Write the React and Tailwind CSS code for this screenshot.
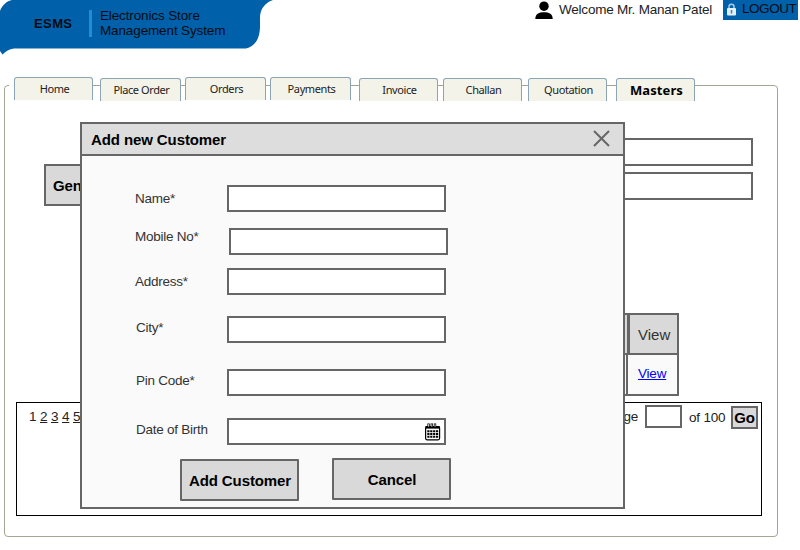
import React from "react";

const tabs = [
  { label: "Home", box: "ml-[9px] w-[79px]", text: "pl-[2px]" },
  { label: "Place Order", box: "ml-[7px] mt-px w-[81px]", text: "pl-[2px]" },
  { label: "Orders", box: "ml-[4px] w-[81px]", text: "pl-[2px]" },
  { label: "Payments", box: "ml-[4px] w-[81px]", text: "pl-[2px]" },
  { label: "Invoice", box: "ml-[8px] mt-px w-[79px]", text: "pl-[2px]" },
  { label: "Challan", box: "ml-[5px] mt-px w-[79px]", text: "pl-[2px]" },
  { label: "Quotation", box: "ml-[6px] mt-px w-[79px]", text: "pl-[2px]" },
  { label: "Masters", box: "ml-[9px] mt-px w-[79px]", text: "pl-[2px] text-[13px] font-bold text-black tracking-[0.1px]" },
];

const fields = [
  { label: "Name*", row: "mt-[29px]", pad: "pl-[53px]", lab: "w-[92px]", up: "mt-[6px]" },
  { label: "Mobile No*", row: "mt-[16px]", pad: "pl-[53px]", lab: "w-[94px]", up: "mt-[1px]" },
  { label: "Address*", row: "mt-[13px]", pad: "pl-[53px]", lab: "w-[92px]", up: "mt-[6px]" },
  { label: "City*", row: "mt-[21px]", pad: "pl-[54px]", lab: "w-[91px]", up: "mt-[4px]" },
  { label: "Pin Code*", row: "mt-[26px]", pad: "pl-[54px]", lab: "w-[91px]", up: "mt-[4px]" },
  { label: "Date of Birth", row: "mt-[22px]", pad: "pl-[54px]", lab: "w-[91px]", up: "mt-[4px]", date: true },
];

function Calendar() {
  return (
    <svg width="17" height="18" viewBox="0 0 17 18">
      <rect x="1.6" y="3.5" width="14" height="13.3" rx="1.5" fill="#fff" stroke="#000" strokeWidth="1.2" />
      <rect x="1.6" y="3" width="14" height="2.6" fill="#000" />
      <g fill="none" stroke="#000" strokeWidth="2.4">
        <path d="M4.600 0.600V4M7.800 0.600V4M11 0.600V4" />
      </g>
      <g stroke="#fff" strokeWidth="0.9">
        <path d="M4.600 1.200V3.600M7.800 1.200V3.600M11 1.200V3.600" />
      </g>
      <g stroke="#000" strokeWidth="1.9" strokeDasharray="2.2 0.700">
        <path d="M3.300 8.200H14.200" />
        <path d="M3.300 11H14.200" />
        <path d="M3.300 13.800H14.200" />
      </g>
    </svg>
  );
}

function Header() {
  return (
    <header className="flex h-[77px] items-start">
      <div className="relative h-[55px] w-[273px]">
        <svg className="absolute inset-0" width="273" height="55" viewBox="0 0 273 55">
          <path
            d="M0 11C2 5 7 1 12 0H273C264 3 260 10 260 18C260 25 260.500 32 258 38C256 43 252 47 246 48.500H14C9 49 6 51 2.500 54.500L0 51Z"
            fill="#0060a9"
          />
        </svg>
        <div className="relative flex text-[#060b12]">
          <span className="ml-[34px] mt-[16px] w-[55px] text-[13px] font-bold leading-[16px] tracking-[0.4px]">ESMS</span>
          <span className="mt-[10px] h-[27px] w-[3px] bg-[#1f8fd0]" />
          <span className="ml-[8px] mt-[8px] whitespace-nowrap text-[13.5px] leading-[15px] tracking-[-0.13px]">
            Electronics Store
            <br />
            Management System
          </span>
        </div>
      </div>
      <svg className="ml-[262px] mt-px" width="18" height="18" viewBox="0 0 18 18">
        <ellipse cx="9" cy="5.2" rx="4.7" ry="4.8" fill="#000" />
        <path d="M0.3 18C0.3 12.800 4 11.200 9 11.200S17.700 12.800 17.700 18Z" fill="#000" />
      </svg>
      <span className="ml-[6px] mt-[2px] w-[164px] whitespace-nowrap text-[13.5px] leading-[16px] tracking-[-0.22px] text-[#222]">
        Welcome Mr. Manan Patel
      </span>
      <div className="flex h-[20px] w-[75px] items-start bg-[#0060a9]">
        <svg className="ml-[3px] mt-[3px]" width="11" height="13" viewBox="0 0 11 13">
          <path d="M3 6V3.5C3 0.5 8 0.5 8 3.5V6" fill="none" stroke="#a9cbe6" strokeWidth="1.5" />
          <rect x="1" y="5" width="9" height="7.5" rx="1" fill="#e4eff8" />
          <path d="M5.5 7V10.5" stroke="#3c85bd" strokeWidth="1.6" />
        </svg>
        <span className="ml-[5px] text-[13.5px] leading-[17px] tracking-[-0.45px] text-[#060b12]">LOGOUT</span>
      </div>
    </header>
  );
}

function Tabs() {
  return (
    <nav className="relative -mt-[9px] flex h-[24px] items-start font-['Noto_Sans','Open_Sans',sans-serif] text-[11px] tracking-[-0.4px] text-[#222]">
      {tabs.map((t) => (
        <div
          key={t.label}
          className={`h-[23px] shrink-0 rounded-t-[3px] border border-b-0 border-[#8ba5b5] bg-[#f3f3e9] text-center leading-[22px] ${t.box}`}
        >
          <span className={t.text}>{t.label}</span>
        </div>
      ))}
      <span className="absolute left-[4px] top-[8px] h-px w-[5px] bg-white" />
    </nav>
  );
}

function Dialog() {
  return (
    <div className="absolute left-[80px] top-[122px] flex h-[387px] w-[545px] flex-col border-2 border-[#666] bg-[#fafafa]">
      <div className="flex h-[32px] shrink-0 items-start justify-between border-b-2 border-[#666] bg-[#ddd]">
        <h2 className="ml-[9px] mt-[6px] text-[15px] font-bold leading-[20px] tracking-[-0.1px] text-black">Add new Customer</h2>
        <svg className="mr-[13px] mt-[6px]" width="17" height="17" viewBox="0 0 17 17">
          <path d="M1 1L16 16M16 1L1 16" stroke="#666" strokeWidth="2" />
        </svg>
      </div>
      {fields.map((f) => (
        <div key={f.label} className={`flex h-[27px] shrink-0 items-start ${f.row} ${f.pad}`}>
          <label className={`whitespace-nowrap text-[13.5px] leading-[15px] tracking-[-0.25px] text-[#333] ${f.lab}`}>
            <span className={`block ${f.up}`}>{f.label}</span>
          </label>
          <div className="flex h-[27px] w-[219px] items-start justify-end border-2 border-[#666] bg-white pr-[3px] pt-[3px]">
            {f.date && <Calendar />}
          </div>
        </div>
      ))}
      <div className="flex items-start pl-[98px] pt-[13px] text-[15px] font-bold tracking-[-0.1px] text-black">
        <button className="mt-px h-[42px] w-[119px] rounded-[1px] border-2 border-[#666] bg-[#d9d9d9] pl-px pt-[2px]">Add Customer</button>
        <button className="ml-[33px] h-[42px] w-[119px] rounded-[1px] border-2 border-[#666] bg-[#d9d9d9] pl-px pt-[2px]">Cancel</button>
      </div>
    </div>
  );
}

export default function App() {
  return (
    <div className="relative h-[550px] w-[800px] overflow-hidden bg-white font-['Liberation_Sans',Arial,sans-serif]">
      <Header />
      <section className="ml-[4px] mt-[8px] h-[452px] w-[774px] rounded-[4px] border border-[#a5a594]">
        <Tabs />
        <div className="flex h-[212px] items-start justify-between pl-[39px] pr-[24px] pt-[37px]">
          <button className="mt-[26px] h-[42px] w-[119px] border-2 border-[#666] bg-[#d9d9d9] pl-[7px] pt-[2px] text-left text-[15px] font-bold tracking-[-0.1px] text-black">
            Generate
          </button>
          <div className="flex flex-col gap-[6px]">
            <div className="h-[28px] w-[218px] border-2 border-[#666] bg-white" />
            <div className="h-[28px] w-[218px] border-2 border-[#666] bg-white" />
          </div>
        </div>
        <div className="ml-[515px] h-[89px] w-[159px]">
          <div className="flex h-[42px] text-[15px] text-[#333]">
            <div className="w-[109px] border-2 border-[#666] bg-[#d9d9d9]" />
            <div className="-ml-px w-[51px] border-2 border-[#666] bg-[#d9d9d9] pl-[8px] leading-[39px]">View</div>
          </div>
          <div className="-mt-[2px] flex h-[43px] text-[13.5px] tracking-[-0.2px]">
            <div className="w-[108px] border-2 border-[#666] bg-[#fafafa]" />
            <div className="-ml-[2px] w-[53px] border-2 border-[#666] bg-[#fafafa] pl-[10px] leading-[37px] text-[#00f] underline">View</div>
          </div>
        </div>
        <div className="ml-[11px] flex h-[114px] w-[746px] items-start justify-between border border-black pr-[3px] text-[13.5px] leading-[15px] tracking-[-0.2px] text-[#222]">
          <div className="ml-[12px] mt-[6px] flex gap-[3.7px]">
            <span>1</span>
            <span className="underline">2</span>
            <span className="underline">3</span>
            <span className="underline">4</span>
            <span className="underline">5</span>
          </div>
          <div className="flex items-start">
            <span className="mr-[7px] mt-[6px]">Page</span>
            <div className="mt-[2px] h-[23px] w-[37px] border-2 border-[#666] bg-white" />
            <span className="ml-[7px] mt-[7px] w-[42px] whitespace-nowrap">of 100</span>
            <button className="mt-[3px] h-[23px] w-[27px] border-2 border-[#666] bg-[#d9d9d9] text-[15px] font-bold leading-[19px] text-black">
              Go
            </button>
          </div>
        </div>
      </section>
      <Dialog />
    </div>
  );
}
